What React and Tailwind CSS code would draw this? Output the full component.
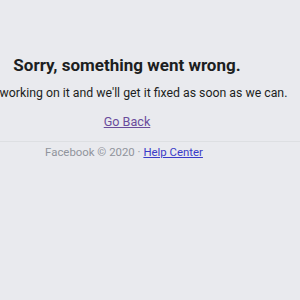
export default function App() {
  return (
    <div className="h-[300px] w-[300px] overflow-hidden bg-[#e9eaee] font-['Roboto',sans-serif]">
      <div className="w-[254px] pt-[55px] text-center">
        <h1 className="text-[17px] leading-[20px] font-bold text-[#1c1e21]">
          Sorry, something went wrong.
        </h1>
        <p className="mt-[10px] -mx-[40px] whitespace-nowrap text-[12.3px] leading-[16px] text-[#1c1e21]">
          We're working on it and we'll get it fixed as soon as we can.
        </p>
        <p className="mt-[12px] text-[12.6px] leading-[17px]">
          <a href="#" className="text-[#6a4c9c] underline">
            Go Back
          </a>
        </p>
      </div>
      <div className="mt-[11px] border-t border-[#dddfe2]">
        <div className="w-[248px] pt-[3px] text-center text-[11.4px] leading-[15px] text-[#90949c]">
          Facebook © 2020 ·{" "}
          <a href="#" className="text-[#3b3bc8] underline">
            Help Center
          </a>
        </div>
      </div>
    </div>
  );
}
